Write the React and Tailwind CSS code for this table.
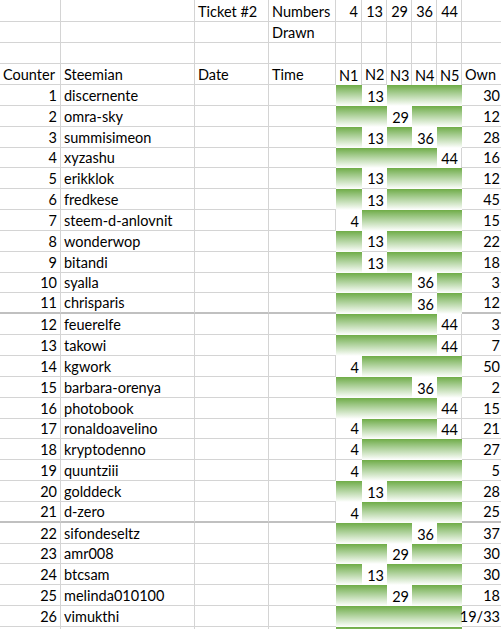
import React from "react";

const G = 0; // green (no match)

const data = [
  [1, "discernente", [G, 13, G, G, G], "30"],
  [2, "omra-sky", [G, G, 29, G, G], "12"],
  [3, "summisimeon", [G, 13, G, 36, G], "28"],
  [4, "xyzashu", [G, G, G, G, 44], "16"],
  [5, "erikklok", [G, 13, G, G, G], "12"],
  [6, "fredkese", [G, 13, G, G, G], "45"],
  [7, "steem-d-anlovnit", [4, G, G, G, G], "15"],
  [8, "wonderwop", [G, 13, G, G, G], "22"],
  [9, "bitandi", [G, 13, G, G, G], "18"],
  [10, "syalla", [G, G, G, 36, G], "3"],
  [11, "chrisparis", [G, G, G, 36, G], "12"],
  [12, "feuerelfe", [G, G, G, G, 44], "3"],
  [13, "takowi", [G, G, G, G, 44], "7"],
  [14, "kgwork", [4, G, G, G, G], "50"],
  [15, "barbara-orenya", [G, G, G, 36, G], "2"],
  [16, "photobook", [G, G, G, G, 44], "15"],
  [17, "ronaldoavelino", [4, G, G, G, 44], "21"],
  [18, "kryptodenno", [4, G, G, G, G], "27"],
  [19, "quuntziii", [4, G, G, G, G], "5"],
  [20, "golddeck", [G, 13, G, G, G], "28"],
  [21, "d-zero", [4, G, G, G, G], "25"],
  [22, "sifondeseltz", [G, G, G, 36, G], "37"],
  [23, "amr008", [G, G, 29, G, G], "30"],
  [24, "btcsam", [G, 13, G, G, G], "30"],
  [25, "melinda010100", [G, G, 29, G, G], "18"],
  [26, "vimukthi", [G, G, G, G, G], "19/33"],
];

const rows = [];
rows.push({
  h: "h-[22px]",
  cells: [
    { t: "" }, { t: "" }, { t: "Ticket #2" }, { t: "Numbers" },
    { t: "4", r: true }, { t: "13", r: true }, { t: "29", r: true }, { t: "36", r: true }, { t: "44", r: true },
    { t: "" },
  ],
});
rows.push({
  h: "h-[21px]",
  cells: [{ t: "" }, { t: "" }, { t: "" }, { t: "Drawn" }, { t: "" }, { t: "" }, { t: "" }, { t: "" }, { t: "" }, { t: "" }],
});
rows.push({
  h: "h-[21px]",
  cells: Array.from({ length: 10 }, () => ({ t: "" })),
});
rows.push({
  h: "h-[21px]",
  cells: ["Counter", "Steemian", "Date", "Time", "N1", "N2", "N3", "N4", "N5", "Own"].map((t) => ({ t })),
});
data.forEach(([n, name, nums, own]) => {
  rows.push({
    h: "h-[20.85px]",
    thick: n === 11 || n === 21,
    cells: [
      { t: String(n), r: true },
      { t: name },
      { t: "" },
      { t: "" },
      ...nums.map((v) => (v === G ? { t: "", g: true } : { t: String(v), r: true })),
      { t: own, r: true },
    ],
  });
});
rows.push({
  h: "h-[20.85px]",
  cells: [
    { t: "" }, { t: "" }, { t: "" }, { t: "" },
    { t: "", g: true }, { t: "", g: true }, { t: "", g: true }, { t: "", g: true }, { t: "", g: true },
    { t: "" },
  ],
});

function isGreen(r, c) {
  const row = rows[r];
  if (!row) return false;
  const cell = row.cells[c];
  return !!(cell && cell.g);
}

export default function App() {
  return (
    <div
      className="w-[501px] h-[629px] overflow-hidden bg-white text-black text-[14.5px]"
      style={{ fontFamily: "Lato, 'Open Sans', sans-serif" }}
    >
      <div className="grid grid-cols-[61px_134px_74px_67px_26px_25px_25px_25px_25px_40px]">
        {rows.map((row, ri) =>
          row.cells.map((cell, ci) => {
            const green = !!cell.g;
            const last = ci === 9;
            const br = !last && !green && !isGreen(ri, ci + 1);
            const bb = !green && !isGreen(ri + 1, ci);
            const cls = [
              "flex items-end whitespace-nowrap overflow-visible pb-[1px] leading-[16px]",
              last && cell.r ? "pl-[2px] pr-[2px]" : "px-[3px]",
              row.h,
              cell.r ? "justify-end" : "justify-start",
              green ? "bg-linear-to-b from-[#6fac46] to-white" : "",
              br ? "border-r border-r-[#d4d4d4]" : "",
              bb && row.thick ? "border-b-2 border-b-[#c0c0c0]" : "",
              bb && !row.thick ? "border-b border-b-[#d4d4d4]" : "",
            ].join(" ");
            return (
              <div key={ri + "-" + ci} className={cls}>
                {cell.t}
              </div>
            );
          })
        )}
      </div>
    </div>
  );
}
